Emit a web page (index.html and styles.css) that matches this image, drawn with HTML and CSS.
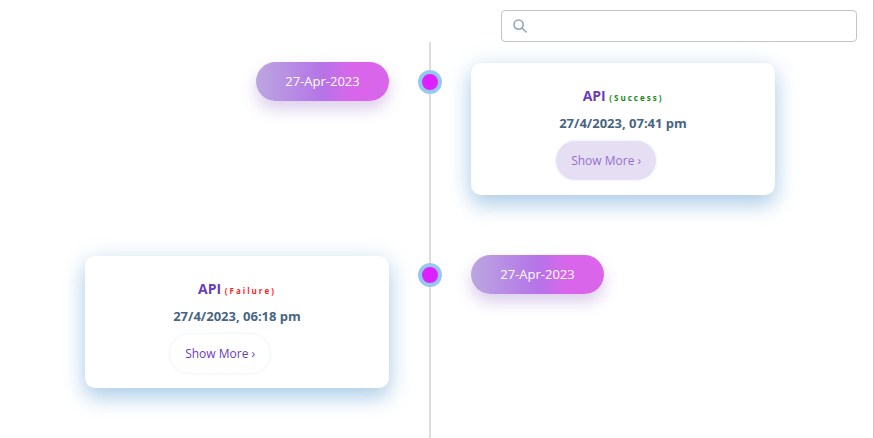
FILE: index.html
```html
<!DOCTYPE html>
<html lang="en">
<head>
  <meta charset="UTF-8" />
  <meta name="viewport" content="width=device-width, initial-scale=1.0"/>
  <title>Timeline</title>
  <link rel="stylesheet" href="styles.css">
</head>
<body>

  <main class="page">
    <label class="search">
      <svg class="search-icon" viewBox="0 0 14 14" aria-hidden="true">
        <circle cx="5.6" cy="5.6" r="4.6"/>
        <path d="M9 9l4 4"/>
      </svg>
      <input type="text" class="search-input" aria-label="Search">
    </label>

    <div class="timeline">
      <section class="entry">
        <div class="date">27-Apr-2023</div>
        <span class="dot"></span>
        <article class="card">
          <div class="card-body">
            <h3 class="title">API <span class="status success">(Success)</span></h3>
            <p class="time">27/4/2023, 07:41 pm</p>
            <button type="button" class="btn-more active">Show More ›</button>
          </div>
        </article>
      </section>

      <section class="entry reverse">
        <div class="date">27-Apr-2023</div>
        <span class="dot"></span>
        <article class="card">
          <div class="card-body">
            <h3 class="title">API <span class="status failure">(Failure)</span></h3>
            <p class="time">27/4/2023, 06:18 pm</p>
            <button type="button" class="btn-more">Show More ›</button>
          </div>
        </article>
      </section>
    </div>
  </main>

</body>
</html>
```

FILE: styles.css
```css
* {
  box-sizing: border-box;
}

body {
  margin: 0;
  font-family: "Segoe UI", "Open Sans", "Noto Sans", sans-serif;
  font-size: 13px;
  background-color: #fff;
}

.page {
  display: flex;
  flex-direction: column;
  min-height: 100vh;
  padding: 10px 16px 0 3px;
  border-right: 1px solid #c8c8c8;
}

.search {
  display: flex;
  align-items: center;
  align-self: flex-end;
  width: 356px;
  max-width: 100%;
  height: 32px;
  padding: 0 11px;
  border: 1px solid #c4c4c4;
  border-radius: 4px;
}

.search-icon {
  width: 14px;
  height: 14px;
  fill: none;
  stroke: #94a7b8;
  stroke-width: 1.6;
  stroke-linecap: round;
}

.search-input {
  flex: 1;
  min-width: 0;
  padding: 0 8px;
  border: none;
  outline: none;
  background: none;
  font: inherit;
}

/* the vertical line runs through the middle column */
.timeline {
  flex: 1;
  padding-top: 20px;
  background: linear-gradient(#ddd, #ddd) center / 2px 100% no-repeat;
}

.entry {
  display: grid;
  grid-template-columns: 1fr 82px 1fr;
  align-items: start;
  margin-bottom: 60px;
}

.entry > * {
  grid-row: 1;
}

.date {
  grid-column: 1;
  justify-self: end;
  width: 133px;
  line-height: 39px;
  border-radius: 20px;
  text-align: center;
  color: #fff;
  background: linear-gradient(to right, #bba6e0, #b574e8 50%, #d966ea 72%, #d966ea);
  box-shadow: 0 8px 16px rgba(111, 60, 180, 0.25);
}

.dot {
  grid-column: 2;
  justify-self: center;
  width: 24px;
  height: 24px;
  margin-top: 8px;
  border: 4px solid #97c9f0;
  border-radius: 50%;
  background-color: #dc20ff;
}

.card {
  grid-column: 3;
  justify-self: start;
  width: 304px;
  max-width: 100%;
  margin-top: 1px;
  padding: 21px 16px 15px;
  border-radius: 10px;
  background-color: #fff;
  box-shadow: 0 1px 24px rgba(120, 175, 220, 0.2), 0 10px 20px rgba(80, 150, 205, 0.4);
}

.reverse .date {
  grid-column: 3;
  justify-self: start;
}

.reverse .card {
  grid-column: 1;
  justify-self: end;
}

.card-body {
  width: fit-content;
  margin: 0 auto;
}

.title {
  margin: 0;
  font-size: 14px;
  line-height: 24px;
  text-align: center;
  color: #6b3cb8;
}

.status {
  font-size: 8px;
  line-height: 1;
  letter-spacing: 2px;
}

.success {
  color: #168a16;
}

.failure {
  color: #ff1e1e;
}

.time {
  margin: 4px 0 7px;
  padding: 0 3px;
  font-weight: bold;
  line-height: 22px;
  color: #476582;
}

.btn-more {
  display: block;
  width: 100px;
  height: 39px;
  padding: 0;
  border: none;
  border-radius: 20px;
  font: inherit;
  font-size: 12px;
  color: #6b3cb8;
  background-color: #fff;
  box-shadow: 0 0 3px rgba(120, 175, 220, 0.25);
  cursor: pointer;
}

.btn-more:hover, .btn-more.active {
  color: #966fcf;
  background-color: #e6dff3;
}
```
